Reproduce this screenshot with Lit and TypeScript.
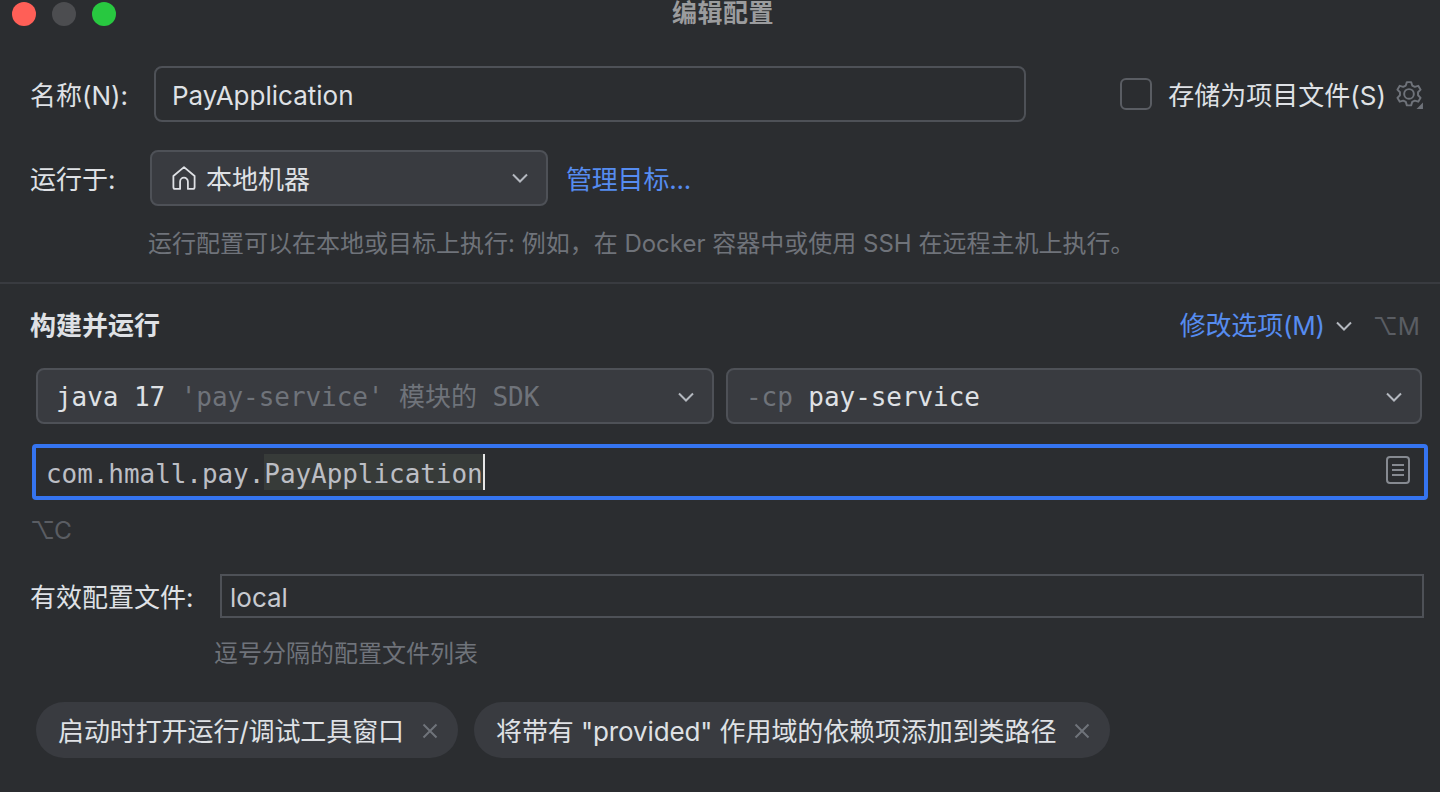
import { LitElement, html, css } from 'lit';
import { customElement } from 'lit/decorators.js';

const chevron = html`<svg class="chevron" width="18" height="10" viewBox="0 0 18 10" fill="none">
  <path d="M2 1.5 9 8.5 16 1.5" stroke="currentColor" stroke-width="2" />
</svg>`;

const close = html`<svg class="close" width="16" height="16" viewBox="0 0 16 16" fill="none">
  <path d="M1.5 1.5 14.5 14.5M14.5 1.5 1.5 14.5" stroke="currentColor" stroke-width="2" />
</svg>`;

@customElement('app-root')
export class AppRoot extends LitElement {
  static styles = css`
    :host {
      display: block;
      width: 1440px;
      height: 792px;
      overflow: hidden;
      background: #2b2d30;
      color: #dfe1e5;
      font-family: Inter, 'Noto Sans CJK SC', sans-serif;
      font-size: 26px;
      line-height: 32px;
    }

    .titlebar {
      display: grid;
      grid-template-columns: 1fr auto 1fr;
      align-items: center;
      height: 28px;
      padding: 0 12px;
    }

    .lights {
      display: flex;
      gap: 16px;
    }

    .light {
      width: 24px;
      height: 24px;
      border-radius: 50%;
    }

    .red { background: #ff5f57; }
    .gray { background: #4c4d50; }
    .green { background: #28c840; }

    .title {
      margin: 0 0 2px 6px;
      font-size: 25px;
      line-height: 24px;
      letter-spacing: 0.5px;
      font-weight: 700;
      color: #9b9c9e;
    }

    .row {
      display: flex;
      align-items: center;
      padding: 0 18px 0 30px;
    }

    .label,
    .lowered {
      flex: none;
      padding-top: 4px;
    }

    .field {
      display: flex;
      align-items: center;
      box-sizing: border-box;
      height: 56px;
      border: 2px solid #4e5157;
      border-radius: 8px;
    }

    .name-row {
      margin-top: 38px;
      padding-right: 17px;
    }

    .name-row .label {
      width: 124px;
    }

    .name-input {
      width: 872px;
      padding: 4px 0 0 16px;
    }

    .save {
      display: flex;
      align-items: center;
      margin-left: auto;
    }

    .checkbox {
      box-sizing: border-box;
      width: 32px;
      height: 32px;
      margin-right: 16px;
      border: 2px solid #5a5d63;
      border-radius: 6px;
    }

    .gear {
      margin-left: 9px;
      color: #6f737a;
    }

    .target-row {
      margin-top: 28px;
    }

    .target-row .label {
      width: 120px;
    }

    .combo {
      background: #393b40;
      color: #dfe1e5;
    }

    .combo .chevron {
      margin-left: auto;
      color: #b4b8bf;
    }

    .target {
      width: 398px;
      padding: 0 17px 0 20px;
    }

    .target svg.home {
      margin-right: 10px;
    }

    .link {
      color: #568cf0;
      letter-spacing: -0.2px;
    }

    .target-row .link {
      margin-left: 18px;
    }

    .hint {
      color: #6f737a;
      font-size: 24px;
    }

    .target-hint {
      margin: 22px 0 0 148px;
    }

    hr {
      height: 2px;
      margin: 22px 0 0;
      border: 0;
      background: #393b40;
    }

    .build-row {
      margin-top: 26px;
      padding-right: 20px;
    }

    .build-title {
      font-weight: 700;
    }

    .options {
      display: flex;
      align-items: center;
      margin-left: auto;
    }

    .options .chevron {
      margin-left: 10px;
      color: #b4b8bf;
    }

    .shortcut {
      color: #5a5d63;
      font-size: 24.5px;
    }

    .options .shortcut {
      margin-left: 20px;
    }

    .mono {
      font-family: 'DejaVu Sans Mono', 'Noto Sans CJK SC', monospace;
      font-size: 26px;
      letter-spacing: -0.06px;
    }

    .combos {
      display: grid;
      grid-template-columns: 678px 696px;
      gap: 12px;
      margin: 26px 0 0 36px;
    }

    .combos .field {
      padding: 2px 17px 0 18px;
    }

    .muted {
      color: #6f737a;
    }

    .main-class {
      display: flex;
      align-items: center;
      box-sizing: border-box;
      height: 56px;
      margin: 20px 12px 0 32px;
      padding: 0 14px 0 10px;
      border: 4px solid #3574f0;
      border-radius: 4px;
      color: #bcbec4;
    }

    .selected {
      display: inline-block;
      height: 36px;
      line-height: 40px;
      background: #373b39;
      border-right: 2px solid #e6e6e6;
    }

    .doc {
      margin: 0 0 4px auto;
    }

    .class-shortcut {
      margin: 14px 0 0 30px;
      letter-spacing: -1px;
    }

    .profile-row {
      margin-top: 28px;
      padding-right: 16px;
    }

    .profile-row .label {
      width: 190px;
    }

    .profile-input {
      flex: 1;
      height: 44px;
      padding: 4px 0 0 8px;
      border-radius: 0;
      color: #c8cad0;
    }

    .profile-hint {
      margin: 20px 0 0 214px;
    }

    .chips {
      display: flex;
      gap: 16px;
      margin: 32px 0 0 36px;
      letter-spacing: -0.1px;
    }

    .chip {
      display: flex;
      align-items: center;
      height: 56px;
      padding: 0 20px 0 22px;
      border-radius: 28px;
      background: #393b40;
    }

    .chip .close {
      margin: 2px 0 0 18px;
      color: #6f737a;
    }
  `;

  render() {
    return html`
      <div class="titlebar">
        <div class="lights">
          <span class="light red"></span>
          <span class="light gray"></span>
          <span class="light green"></span>
        </div>
        <div class="title">编辑配置</div>
      </div>

      <div class="row name-row">
        <span class="label">名称(N):</span>
        <div class="field name-input">PayApplication</div>
        <div class="save">
          <span class="checkbox"></span>
          <span class="lowered">存储为项目文件(S)</span>
          <svg class="gear" width="28" height="29" viewBox="0 0 26 27" fill="none">
            <path
              d="M11 2h4l1 3.2 2.4 1.2 3.2-1 2.2 3.6-2.4 2.4v2.8l2.4 2.4-2.2 3.6-3.2-1-2.4 1.2-1 3.2h-4l-1-3.2-2.4-1.2-3.2 1-2.2-3.6 2.4-2.4v-2.8l-2.4-2.4 2.2-3.6 3.2 1 2.4-1.2z"
              stroke="currentColor"
              stroke-width="1.800"
              stroke-linejoin="round"
            />
            <circle cx="13" cy="13" r="4.500" stroke="currentColor" stroke-width="1.800" />
            <path d="M26 21v6h-6z" fill="currentColor" />
          </svg>
        </div>
      </div>

      <div class="row target-row">
        <span class="label">运行于:</span>
        <div class="field combo target">
          <svg class="home" width="24" height="24" viewBox="1.500 1 21 21.500" fill="none">
            <path
              d="M2.500 10 12 2l9.500 8v10a1.500 1.500 0 0 1-1.500 1.500h-4.500V15a3.500 3.500 0 0 0-7 0v6.500H4A1.500 1.500 0 0 1 2.500 20z"
              stroke="currentColor"
              stroke-width="1.600"
              stroke-linejoin="round"
            />
          </svg>
          <span class="lowered">本地机器</span>
          ${chevron}
        </div>
        <span class="link lowered">管理目标...</span>
      </div>
      <div class="hint target-hint">运行配置可以在本地或目标上执行: 例如，在 Docker 容器中或使用 SSH 在远程主机上执行。</div>

      <hr />

      <div class="row build-row">
        <span class="build-title">构建并运行</span>
        <div class="options">
          <span class="link">修改选项(M)</span>
          ${chevron}
          <span class="shortcut">⌥M</span>
        </div>
      </div>

      <div class="combos mono">
        <div class="field combo">
          <span>java 17 <span class="muted">'pay-service' 模块的 SDK</span></span>
          ${chevron}
        </div>
        <div class="field combo">
          <span><span class="muted">-cp</span> pay-service</span>
          ${chevron}
        </div>
      </div>

      <div class="main-class mono">
        <span>com.hmall.pay.<span class="selected">PayApplication</span></span>
        <svg class="doc" width="24" height="28" viewBox="0 0 24 28" fill="none">
          <rect x="1" y="1" width="22" height="26" rx="3" stroke="#868a91" stroke-width="2" />
          <path d="M6 9h12M6 14h12M6 19h12" stroke="#868a91" stroke-width="2" />
        </svg>
      </div>

      <div class="shortcut class-shortcut">⌥C</div>

      <div class="row profile-row">
        <span class="label">有效配置文件:</span>
        <div class="field profile-input">local</div>
      </div>
      <div class="hint profile-hint">逗号分隔的配置文件列表</div>

      <div class="chips">
        <div class="chip"><span class="lowered">启动时打开运行/调试工具窗口</span>${close}</div>
        <div class="chip"><span class="lowered">将带有 "provided" 作用域的依赖项添加到类路径</span>${close}</div>
      </div>
    `;
  }
}
